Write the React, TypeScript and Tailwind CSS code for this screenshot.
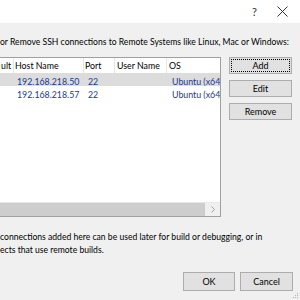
import React from 'react';

const rows = [
    { host: '192.168.218.50', port: '22', user: '', os: 'Ubuntu (x64)', selected: true },
    { host: '192.168.218.57', port: '22', user: '', os: 'Ubuntu (x64)', selected: false },
];

const Btn: React.FC<{ label: string; className?: string }> = ({ label, className = '' }) => (
    <button
        className={`flex items-center justify-center bg-[#e1e1e1] border border-[#adadad] text-[9px] text-black ${className}`}
    >
        {label}
    </button>
);

const App: React.FC = () => {
    return (
        <div
            className="relative w-[300px] h-[300px] overflow-hidden bg-[#f0f0f0] flex flex-col text-black"
            style={{ fontFamily: 'Lato, "Noto Sans", sans-serif' }}
        >
            {/* title bar */}
            <div className="h-[23px] bg-white flex items-center justify-end shrink-0">
                <span className="text-[11px] text-[#333] mr-[20px] leading-none">?</span>
                <svg width="11" height="11" viewBox="0 0 11 11" className="mr-[12px]">
                    <path d="M0.5 0.5 L10.5 10.5 M10.5 0.5 L0.5 10.5" stroke="#333" strokeWidth="1" />
                </svg>
            </div>

            <div className="text-[8.6px] leading-[13px] mt-[13px] whitespace-nowrap">
                or Remove SSH connections to Remote Systems like Linux, Mac or Windows:
            </div>

            <div className="flex mt-[8px]">
                {/* list view */}
                <div className="w-[221px] h-[160px] bg-white border-r border-b border-t border-[#a0a0a0] flex flex-col overflow-hidden">
                    <div className="h-[15px] flex text-[8.8px] leading-[15px] whitespace-nowrap shrink-0">
                        <div className="w-[14px] pl-[1px] border-r border-[#e5e5e5]">ult</div>
                        <div className="w-[70px] pl-[1px] border-r border-[#e5e5e5]">Host Name</div>
                        <div className="w-[31px] pl-[1px] border-r border-[#e5e5e5]">Port</div>
                        <div className="w-[52px] pl-[2px] border-r border-[#e5e5e5]">User Name</div>
                        <div className="flex-1 pl-[2px]">OS</div>
                    </div>
                    {rows.map((r) => (
                        <div
                            key={r.host}
                            className={`h-[13px] flex text-[8.8px] leading-[13px] pt-[2px] text-[#1b3a8c] whitespace-nowrap overflow-hidden ${r.selected ? 'bg-[#dcdcdc]' : ''}`}
                        >
                            <div className="w-[14px]" />
                            <div className="w-[70px] pl-[3px]">{r.host}</div>
                            <div className="w-[31px] pl-[4px]">{r.port}</div>
                            <div className="w-[52px]">{r.user}</div>
                            <div className="flex-1 pl-[5px] overflow-hidden">{r.os}</div>
                        </div>
                    ))}
                    <div className="flex-1" />
                    <div className="h-[14px] flex shrink-0 border-t border-[#e8e8e8] bg-[#f0f0f0]">
                        <div className="w-[205px] bg-[#cdcdcd]" />
                        <div className="flex-1 flex items-center justify-center">
                            <svg width="4" height="7" viewBox="0 0 4 7">
                                <path d="M0.5 0.5 L3.5 3.5 L0.5 6.5" stroke="#a0a0a0" fill="none" strokeWidth="1" />
                            </svg>
                        </div>
                    </div>
                </div>

                {/* side buttons */}
                <div className="ml-[8px] flex flex-col gap-[6px]">
                    <Btn label="Add" className="w-[63px] h-[17px] outline-1 outline-dotted outline-black -outline-offset-[3px]" />
                    <Btn label="Edit" className="w-[63px] h-[17px]" />
                    <Btn label="Remove" className="w-[63px] h-[17px]" />
                </div>
            </div>

            <div className="text-[8.6px] leading-[13px] mt-[14px] whitespace-nowrap">
                <div>connections added here can be used later for build or debugging, or in</div>
                <div>ects that use remote builds.</div>
            </div>

            <div className="flex justify-end mt-[15px] mr-[7px] gap-[5px]">
                <Btn label="OK" className="w-[52px] h-[19px] border-[#0078d7]" />
                <Btn label="Cancel" className="w-[53px] h-[19px]" />
            </div>

            {/* resize grip */}
            <svg width="6" height="6" viewBox="0 0 6 6" className="absolute right-[1px] bottom-[1px]">
                <rect x="4" y="0" width="1" height="1" fill="#b0b0b0" />
                <rect x="2" y="2" width="1" height="1" fill="#b0b0b0" />
                <rect x="4" y="2" width="1" height="1" fill="#b0b0b0" />
                <rect x="0" y="4" width="1" height="1" fill="#b0b0b0" />
                <rect x="2" y="4" width="1" height="1" fill="#b0b0b0" />
                <rect x="4" y="4" width="1" height="1" fill="#b0b0b0" />
            </svg>
        </div>
    );
};

export default App;
